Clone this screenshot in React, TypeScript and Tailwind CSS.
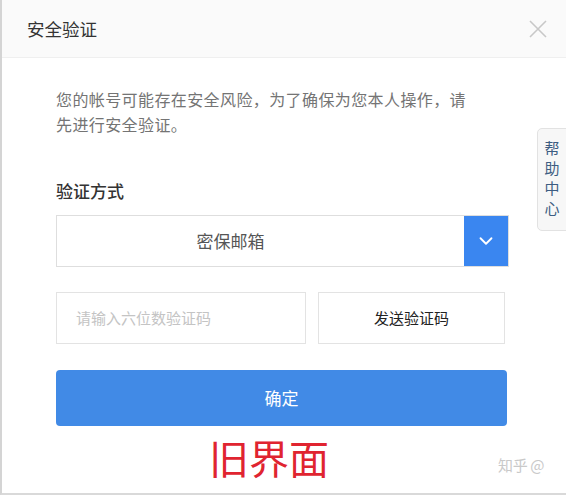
import { ChevronDown } from 'lucide-react';

const cjk = { fontFamily: '"Microsoft YaHei", "Noto Sans CJK SC", "Noto Sans", sans-serif' };

function CloseIcon() {
  return (
    <svg width="20" height="20" viewBox="0 0 20 20" className="text-[#c8c8c8]">
      <path d="M2 2 L18 18 M18 2 L2 18" stroke="currentColor" strokeWidth="1.6" fill="none" />
    </svg>
  );
}

export default function App() {
  return (
    <div
      className="relative w-[566px] h-[495px] overflow-hidden bg-white border-l-2 border-l-[#d4d4d4] border-b-2 border-b-[#d9d9d9]"
      style={cjk}
    >
      {/* header */}
      <div className="h-[58px] bg-[#fafafa] border-b border-[#efefef] flex items-center justify-between pl-[25px] pr-[18px]">
        <h1 className="text-[17.5px] text-[#333] leading-none">安全验证</h1>
        <CloseIcon />
      </div>

      {/* body */}
      <div className="pl-[54px] pr-[58px] pt-[29px]">
        <p className="w-[420px] text-[16px] tracking-[0.4px] leading-[25px] text-[#747474]">
          您的帐号可能存在安全风险，为了确保为您本人操作，请先进行安全验证。
        </p>

        <div className="mt-[42px] text-[17px] leading-[24px] text-[#333] font-medium">验证方式</div>

        <div className="mt-[12px] w-[453px] h-[52px] flex border border-[#dedede]">
          <div className="flex-1 flex items-center justify-center pr-[60px] text-[17px] text-[#555]">密保邮箱</div>
          <div className="w-[44px] bg-[#3a86f0] flex items-center justify-center">
            <ChevronDown size={22} strokeWidth={2} className="text-white" />
          </div>
        </div>

        <div className="mt-[25px] flex gap-[12px] pr-[3px]">
          <div className="w-[250px] h-[52px] border border-[#e3e3e3] flex items-center pl-[19px] text-[15px] text-[#c4c4c4]">
            请输入六位数验证码
          </div>
          <button className="flex-1 h-[52px] border border-[#e3e3e3] bg-white text-[15px] text-[#222]">
            发送验证码
          </button>
        </div>

        <button className="mt-[26px] w-[451px] h-[56px] rounded-[4px] bg-[#418ae6] text-white text-[17px]">
          确定
        </button>

        <div className="mt-[6px] pl-[153px] text-[40px] leading-[50px] text-[#e02430]">旧界面</div>
      </div>

      {/* help tab */}
      <div className="absolute top-[128px] left-[535px] w-[36px] h-[103px] bg-[#f7f7f7] border border-[#e2e2e2] rounded-l-[5px] flex flex-col items-center pt-[9px] pr-[6px] text-[15px] leading-[20px] text-[#3d5d82]">
        <span>帮</span>
        <span>助</span>
        <span>中</span>
        <span>心</span>
      </div>

      {/* watermark */}
      <div className="absolute top-[454px] left-[496px] text-[15px] text-[#c9c9c9] tracking-tight">知乎 @</div>
    </div>
  );
}
